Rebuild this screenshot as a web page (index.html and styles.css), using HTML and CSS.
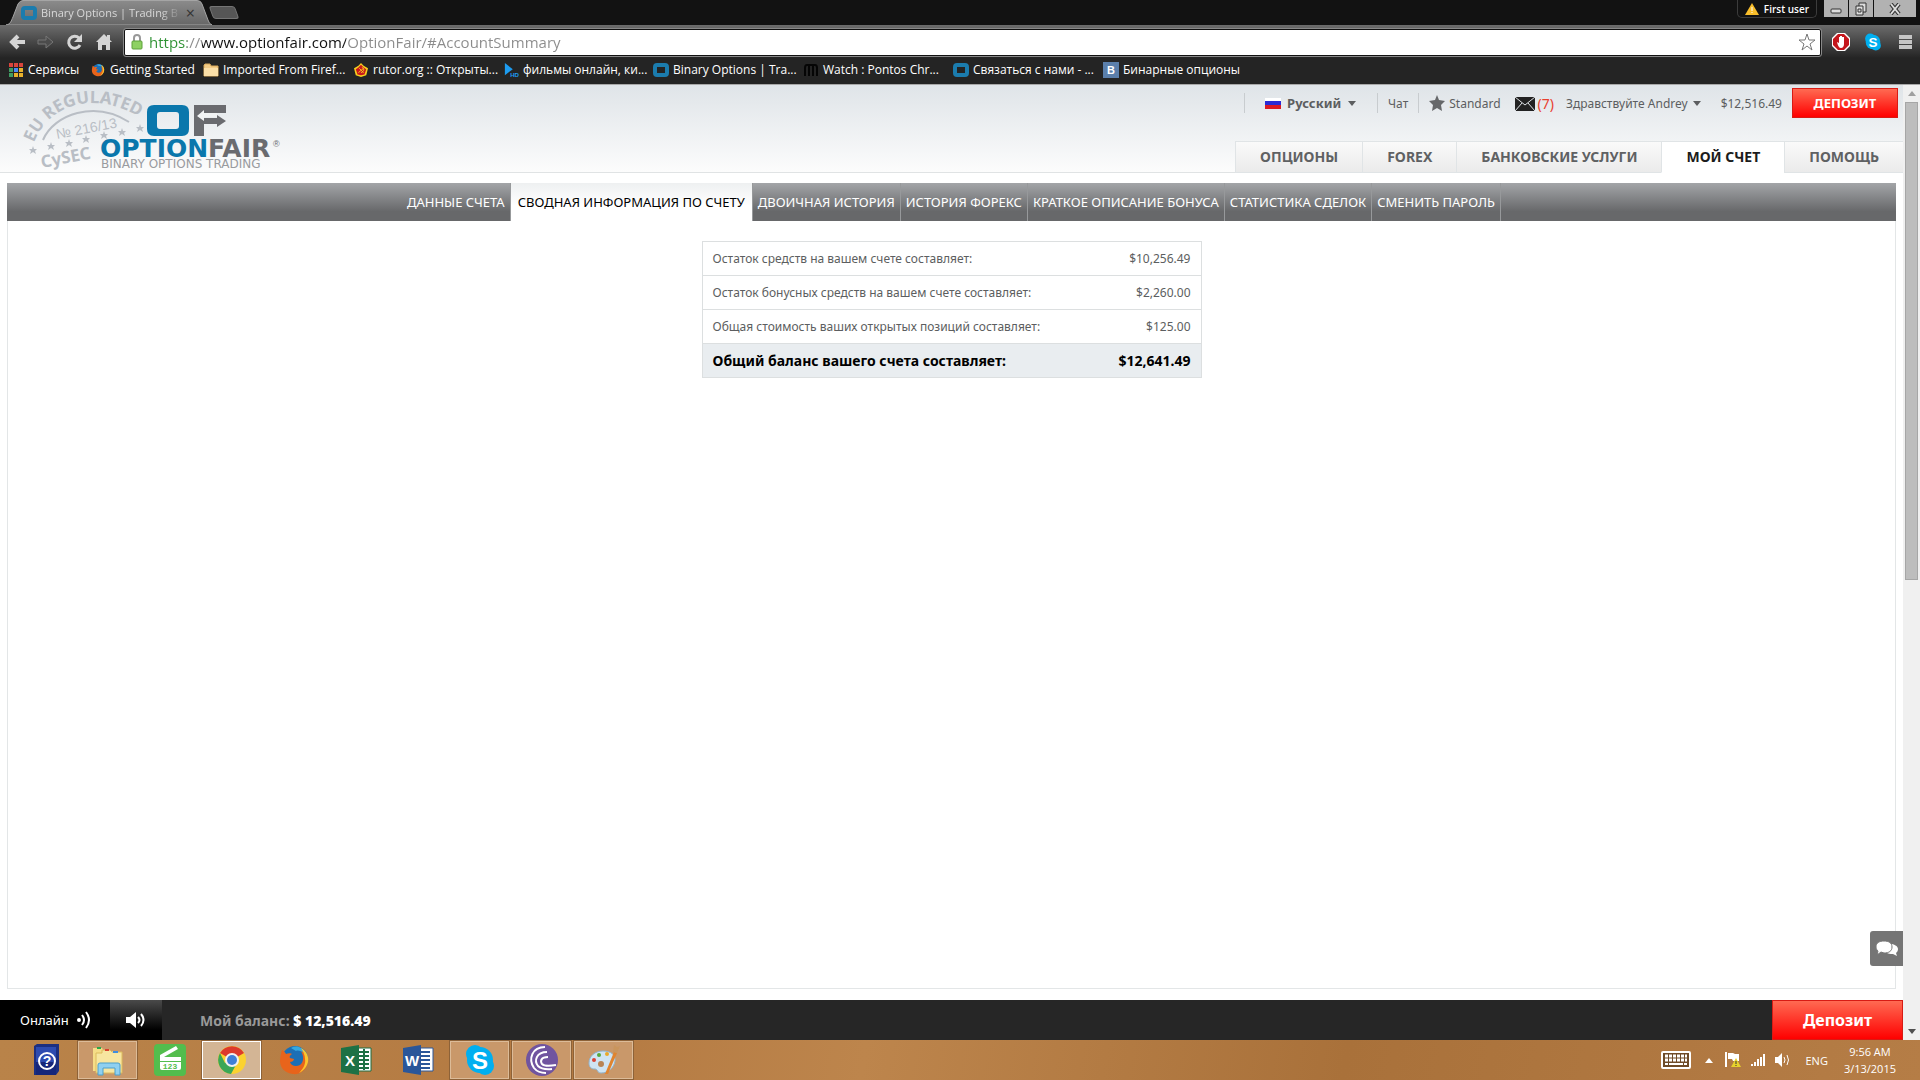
FILE: index.html
```
<!DOCTYPE html>
<html lang="ru">
<head>
    <meta charset="UTF-8" />
    <meta name="viewport" content="width=device-width, initial-scale=1.0"/>
    <title>Binary Options | Trading</title>
    <link rel="stylesheet" href="styles.css">
</head>
<body>
    <svg class="defs" aria-hidden="true">
        <symbol id="i-of" viewBox="0 0 16 14"><rect x="2" y="2" width="12" height="10" rx="2" fill="none" stroke="#1b7cae" stroke-width="4"/></symbol>
        <symbol id="i-firefox" viewBox="0 0 32 32">
            <circle cx="17" cy="15" r="13" fill="#1c6fb5"/>
            <path d="M13 4c5-3 12-1 14 5-4-2-7-3-9-2z" fill="#35a8e0"/>
            <path d="M4 6c2 1 3 2 4 4 2-1 5-1 6 0-2 1-3 3-2 4l4 1c0 2-2 3-4 3 1 4 6 5 10 3 4-3 4-9 1-14 6 3 8 9 6 14-2 6-8 10-14 9C7 29 2 24 2 17 2 13 3 9 4 6z" fill="#e8641b"/>
            <path d="M23 4c6 3 8 9 7 14-1 5-5 9-9 11 4-4 7-9 6-14 0-4-2-8-4-11z" fill="#fbc52d"/>
        </symbol>
        <symbol id="i-skype" viewBox="0 0 32 32">
            <circle cx="11" cy="10" r="9" fill="#00aff0"/><circle cx="21" cy="22" r="9" fill="#00aff0"/><circle cx="16" cy="16" r="13" fill="#00aff0"/>
            <text x="16" y="25" text-anchor="middle" class="skype-s">S</text>
        </symbol>
        <symbol id="i-caret" viewBox="0 0 8 5"><path d="M0 0h8L4 5z" fill="#5c5e60"/></symbol>
    </svg>

    <header class="browser">
        <div class="tab-strip">
            <div class="tab">
                <svg class="tab-shape" viewBox="0 0 206 25" preserveAspectRatio="none">
                    <defs><linearGradient id="tab_fill" x1="0" y1="0" x2="0" y2="1"><stop offset="0" stop-color="#8b8b8b"/><stop offset="1" stop-color="#676767"/></linearGradient></defs>
                    <path d="M0 25C5 24 5 21 7 17L12 4Q14 .5 17 .5H191Q195 .5 196 4L202 20Q203 24 206 25z" fill="url(#tab_fill)" stroke="#a5a5a5"/>
                </svg>
                <svg class="tab-icon"><use href="#i-of"/></svg>
                <span class="tab-title">Binary Options | Trading B</span>
                <button class="tab-close" aria-label="Close tab">×</button>
            </div>
            <button class="new-tab" aria-label="New tab"></button>
            <div class="window-controls">
                <button class="profile"><svg width="14" height="12" viewBox="0 0 14 12"><path d="M7 0l7 12H0z" fill="#f9be2b"/><path d="M7 4v4M7 9v1" stroke="#fff" stroke-width="1"/></svg>First user</button>
                <div class="window-buttons">
                    <button aria-label="Minimize"><svg width="12" height="12"><rect x="1" y="6" width="10" height="4" rx="1" fill="#ddd" stroke="#333"/></svg></button>
                    <button aria-label="Restore"><svg width="14" height="14" fill="#ddd" stroke="#333"><path d="M5 1h7v9H5z"/><path d="M2 4h7v9H2z"/><path d="M4 7h3v3H4z"/></svg></button>
                    <button class="close" aria-label="Close"><svg width="12" height="12"><path d="M2 1l8 10M10 1L2 11" stroke="#333" stroke-width="4"/><path d="M2 1l8 10M10 1L2 11" stroke="#ddd" stroke-width="2"/></svg></button>
                </div>
            </div>
        </div>

        <div class="toolbar">
            <button aria-label="Back"><svg viewBox="0 0 18 18"><path d="M10 3L4 9l6 6M4 9h13" fill="none" stroke="#d5d5d5" stroke-width="4"/></svg></button>
            <button aria-label="Forward"><svg viewBox="0 0 18 18"><path d="M1 7h8V3l7 6-7 6v-4H1z" fill="#4c4c4c" stroke="#777"/></svg></button>
            <button aria-label="Reload"><svg viewBox="0 0 18 18"><path d="M14 12a6 6 0 1 1-1-7" fill="none" stroke="#d5d5d5" stroke-width="3"/><path d="M16 1v8H8z" fill="#d5d5d5"/></svg></button>
            <button aria-label="Home"><svg viewBox="0 0 18 18"><path d="M9 1l8 8h-2v8h-4v-5H7v5H3V9H1z" fill="#d5d5d5"/><path d="M12 2h3v5h-3z" fill="#d5d5d5"/></svg></button>
            <div class="omnibox">
                <svg class="lock" viewBox="0 0 12 16"><path d="M3 8V4a3 3 0 0 1 6 0v4" fill="none" stroke="#999" stroke-width="2"/><rect x="1" y="7" width="10" height="8" rx="1" fill="#8ed163" stroke="#5da13b"/></svg>
                <input class="address" type="text" aria-label="Address" value="https://www.optionfair.com/OptionFair/#AccountSummary">
                <svg class="star" viewBox="0 0 18 18"><path d="M9 1l2 6h6l-5 4 2 6-5-4-5 4 2-6-5-4h6z" fill="#fff" stroke="#777"/></svg>
            </div>
            <div class="extensions">
                <button aria-label="AdBlock"><svg viewBox="0 0 18 18"><path d="M5 0h8l5 5v8l-5 5H5l-5-5V5z" fill="#fff"/><path d="M6 1h6l5 5v6l-5 5H6l-5-5V6z" fill="#c4161c"/><path d="M5 9l2 1V4h1v4V3h1v5V3h1v5V4h2v7c0 2-1 4-3 4s-3-2-4-6z" fill="#fff"/></svg></button>
                <button aria-label="Skype"><svg viewBox="0 0 32 32"><use href="#i-skype"/></svg></button>
                <button aria-label="Menu"><svg viewBox="0 0 18 18"><path d="M3 4h13M3 9h13M3 14h13" stroke="#c5c5c5" stroke-width="4"/></svg></button>
            </div>
        </div>

        <nav class="bookmarks">
            <a class="apps" href="#"><svg viewBox="0 0 14 14"><path d="M0 2h4M5 2h4M10 2h4" stroke="#d9453d" stroke-width="4"/><path d="M0 7h4" stroke="#3f9b62" stroke-width="4"/><path d="M5 7h4" stroke="#4a8af4" stroke-width="4"/><path d="M10 7h4M10 12h4M5 12h4" stroke="#e8b12c" stroke-width="4"/><path d="M0 12h4" stroke="#3f9b62" stroke-width="4"/></svg><span>Сервисы</span></a>
            <a class="started" href="#"><svg><use href="#i-firefox"/></svg><span>Getting Started</span></a>
            <a href="#"><svg viewBox="0 0 16 14"><path d="M1 2l1-1h5l1 2h7v10H1z" fill="#f3cb86" stroke="#d9a95a"/><path d="M1 5h14v8H1z" fill="#fbdfa8"/></svg><span>Imported From Firef...</span></a>
            <a href="#"><svg viewBox="0 0 16 16"><path d="M8 0l3 3 5 3-2 8-6 2-6-2-2-8 5-3z" fill="#f7cf1d"/><path d="M8 2l3 3 3 2-2 6-4 1-4-1-2-6 3-2z" fill="#c9171d"/><path d="M5 11l6-5M6 6l5 5M9 5c3 1 3 5-1 6" fill="none" stroke="#f7cf1d"/></svg><span>rutor.org :: Открыты...</span></a>
            <a href="#"><svg viewBox="0 0 16 16"><path d="M1 0l9 7-9 7z" fill="#1d9cf0"/><text x="7" y="16" class="hd">HD</text></svg><span>фильмы онлайн, ки...</span></a>
            <a href="#"><svg><use href="#i-of"/></svg><span>Binary Options | Tra...</span></a>
            <a href="#"><svg viewBox="0 0 16 14"><path d="M2 13V5q0-3 2-3h8q2 0 2 3v8M6 13V3M10 13V3" fill="none" stroke="#050505" stroke-width="2"/></svg><span>Watch : Pontos Chr...</span></a>
            <a href="#"><svg><use href="#i-of"/></svg><span>Связаться с нами - ...</span></a>
            <a href="#"><svg class="square" viewBox="0 0 16 16"><rect width="16" height="16" fill="#5b7fab"/><text x="8" y="12" text-anchor="middle" class="vk">B</text></svg><span>Бинарные опционы</span></a>
        </nav>
    </header>

    <div class="viewport">
        <div class="page">
            <header class="site-header">
                <a class="logo" href="#" aria-label="OptionFair">
                    <svg width="300" height="87" viewBox="0 0 300 87">
                        <defs>
                            <path id="arc_top" d="M34 58C48 20 95 2 146 36"/>
                            <path id="star" d="M0 -4L1 -1H4L2 1L3 4L0 2L-3 4L-2 1L-4 -1H-1z"/>
                        </defs>
                        <g fill="#b9bec5">
                            <text class="stamp"><textPath href="#arc_top">EU REGULATED</textPath></text>
                            <path d="M43 55C54 29 95 15 129 37" fill="none" stroke="#b9bec5" stroke-width="2"/>
                            <text class="stamp-no" transform="translate(57 54) rotate(-11)">№ 216/13</text>
                            <use href="#star" x="33" y="65"/><use href="#star" x="51" y="61"/><use href="#star" x="69" y="58"/><use href="#star" x="86" y="54"/><use href="#star" x="104" y="50"/><use href="#star" x="122" y="47"/><use href="#star" x="140" y="43"/>
                            <text class="stamp-cysec" transform="translate(42 83) rotate(-11)">CySEC</text>
                        </g>
                        <path fill-rule="evenodd" d="M154 20h28q7 0 7 7v17q0 7-7 7h-28q-7 0-7-7V27q0-7 7-7zM160 27q-3 0-3 3v11q0 3 3 3h16q3 0 3-3V30q0-3-3-3z" fill="#0a77ac"/>
                        <path d="M194 20h32v8h-22v5h13v-3l9 6-9 6v-3h-13v12h-10z" fill="#6a6b6f"/>
                        <path d="M197 31l7-6v3h13v4h-13v4z" fill="#f1f3f4"/>
                        <text x="100" y="72" class="brand"><tspan fill="#0a77ac">OPTION</tspan><tspan fill="#6a6b6f">FAIR</tspan></text>
                        <text x="273" y="62" class="reg">®</text>
                        <text x="101" y="83" class="tagline">BINARY OPTIONS TRADING</text>
                    </svg>
                </a>
                <div class="header-right">
                    <div class="user-bar">
                        <label class="language">
                            <svg width="16" height="11" viewBox="0 0 16 11"><path d="M0 0h16v4H0z" fill="#fff"/><path d="M0 3h16v5H0z" fill="#2b2bd5"/><path d="M0 7h16v4H0z" fill="#dc1a22"/></svg>
                            <select aria-label="Язык"><option>Русский</option></select>
                            <svg class="caret"><use href="#i-caret"/></svg>
                        </label>
                        <a class="chat-link" href="#">Чат</a>
                        <a class="level" href="#"><svg width="16" height="16" viewBox="0 0 16 16"><path d="M8 0l2 5 6 1-4 4 1 6-5-3-5 3 1-6-4-4 6-1z" fill="#66686a"/></svg>Standard</a>
                        <a class="mail" href="#"><svg width="20" height="14" viewBox="0 0 20 14"><rect width="20" height="14" fill="#222"/><path d="M0 0l10 8L20 0M0 14l7-8M20 14l-7-8" fill="none" stroke="#dfe3e6"/></svg>(7)</a>
                        <button class="greeting">Здравствуйте Andrey<svg class="caret"><use href="#i-caret"/></svg></button>
                        <span class="funds">$12,516.49</span>
                        <button class="deposit">ДЕПОЗИТ</button>
                    </div>
                    <nav class="main-nav">
                        <a href="#">ОПЦИОНЫ</a>
                        <a href="#">FOREX</a>
                        <a href="#">БАНКОВСКИЕ УСЛУГИ</a>
                        <a class="active" href="#">МОЙ СЧЕТ</a>
                        <a href="#">ПОМОЩЬ</a>
                    </nav>
                </div>
            </header>

            <main class="content">
                <nav class="sub-nav">
                    <a href="#">ДАННЫЕ СЧЕТА</a>
                    <a class="active" href="#">СВОДНАЯ ИНФОРМАЦИЯ ПО СЧЕТУ</a>
                    <a href="#">ДВОИЧНАЯ ИСТОРИЯ</a>
                    <a href="#">ИСТОРИЯ ФОРЕКС</a>
                    <a href="#">КРАТКОЕ ОПИСАНИЕ БОНУСА</a>
                    <a href="#">СТАТИСТИКА СДЕЛОК</a>
                    <a href="#">СМЕНИТЬ ПАРОЛЬ</a>
                </nav>
                <div class="panel">
                    <table class="summary">
                        <tbody>
                            <tr><th scope="row">Остаток средств на вашем счете составляет:</th><td>$10,256.49</td></tr>
                            <tr><th scope="row">Остаток бонусных средств на вашем счете составляет:</th><td>$2,260.00</td></tr>
                            <tr><th scope="row">Общая стоимость ваших открытых позиций составляет:</th><td>$125.00</td></tr>
                            <tr class="total"><th scope="row">Общий баланс вашего счета составляет:</th><td>$12,641.49</td></tr>
                        </tbody>
                    </table>
                </div>
            </main>

            <button class="chat-float" aria-label="Чат"><svg width="22" height="16" viewBox="0 0 22 16"><path d="M14 3c4 0 8 2 8 5 0 2-1 3-2 4l1 3-4-2c-3 0-5 0-7-2z" fill="#fff"/><path d="M8 0c5 0 8 2 8 6s-3 6-8 6l-3-1-4 3 1-4C1 9 0 8 0 6c0-4 3-6 8-6z" fill="#fff" stroke="#757575"/></svg></button>

            <footer class="status-bar">
                <div class="online">Онлайн<svg width="15" height="18" viewBox="0 0 15 18" fill="none" stroke="#fff" stroke-width="2"><circle cx="3" cy="9" r="2" fill="#fff" stroke="none"/><path d="M6 4q4 5 0 10M10 1q6 8 0 16"/></svg></div>
                <button class="sound" aria-label="Звук"><svg width="20" height="16" viewBox="0 0 20 16"><path d="M0 5h4l6-5v16l-6-5H0z" fill="#fff"/><path d="M12 5q3 3 0 6M15 2q5 6 0 12" fill="none" stroke="#fff" stroke-width="2"/></svg></button>
                <p class="balance">Мой баланс: <strong>$ 12,516.49</strong></p>
                <button class="deposit deposit-large">Депозит</button>
            </footer>
        </div>
        <div class="scrollbar">
            <div class="arrow"><svg width="8" height="5" viewBox="0 0 8 5"><path d="M0 5h8L4 0z" fill="#a0a0a0"/></svg></div>
            <div class="thumb"></div>
            <div class="track"></div>
            <div class="arrow"><svg width="8" height="5" viewBox="0 0 8 5"><path d="M0 0h8L4 5z" fill="#505050"/></svg></div>
        </div>
    </div>

    <div class="taskbar">
        <div class="apps-row">
            <button aria-label="Help"><svg viewBox="0 0 32 32"><path d="M4 2l3-2h22v27l-3 4H4z" fill="#1c2f80"/><path d="M6 3h20v28H6z" fill="#2d4bb0"/><path d="M6 18h20v13H6z" fill="#16267a"/><circle cx="17" cy="17" r="8" fill="none" stroke="#fff" stroke-width="2"/><text x="17" y="22" text-anchor="middle" class="q">?</text></svg></button>
            <button class="open" aria-label="Explorer"><svg viewBox="0 0 32 32"><path d="M1 4h9l2 3h9v20H1z" fill="#f5dd87"/><path d="M10 6h8l2 2h10v21H4V9h6z" fill="#f7e6a0" stroke="#dcbb5c"/><path d="M5 3h4v2H5z" fill="#2ca84a"/><path d="M13 5h4v2h-4z" fill="#d9402f"/><path d="M21 7h5v2h-5z" fill="#3e8ede"/><path d="M6 31V21q0-2 2-2h18q2 0 2 2v10h-5v-7H11v7z" fill="#8fd0f0" stroke="#4c9fca"/></svg></button>
            <button aria-label="123"><svg viewBox="0 0 32 32"><rect width="32" height="32" rx="4" fill="#53bd4d"/><path d="M6 11L22 2l2 3-14 8h17v4H6z" fill="#fff"/><path d="M6 18h21v6q0 2-2 2H8q-2 0-2-2z" fill="#fff"/><text x="16" y="25" text-anchor="middle" class="n123">123</text></svg></button>
            <button class="open current" aria-label="Chrome"><svg viewBox="0 0 32 32"><circle cx="16" cy="16" r="14" fill="#fbd22f"/><path d="M16 16L4 9A14 14 0 0 1 28 9z" fill="#dc3a2c"/><path d="M4 9a14 14 0 0 0 11 21l6-11-5-3-7 3z" fill="#3aa757"/><circle cx="16" cy="16" r="7" fill="#f1f1f1"/><circle cx="16" cy="16" r="5" fill="#3f7fd6"/></svg></button>
            <button aria-label="Firefox"><svg><use href="#i-firefox"/></svg></button>
            <button aria-label="Excel"><svg viewBox="0 0 32 32"><path d="M16 4h15v23H16z" fill="#fff" stroke="#1d6f42"/><path d="M19 8h10M19 12h10M19 16h10M19 20h10M19 24h10M24 5v21" stroke="#1d6f42" stroke-width="2"/><path d="M1 4l18-3v30L1 28z" fill="#1d7145"/><text x="10" y="22" text-anchor="middle" class="office">X</text></svg></button>
            <button aria-label="Word"><svg viewBox="0 0 32 32"><path d="M16 4h15v23H16z" fill="#fff" stroke="#2a5699"/><path d="M19 8h9M19 12h9M19 16h9M19 20h9M19 24h9" stroke="#2a5699" stroke-width="2"/><path d="M1 4l18-3v30L1 28z" fill="#2a5699"/><text x="10" y="22" text-anchor="middle" class="office">W</text></svg></button>
            <button class="open" aria-label="Skype"><svg><use href="#i-skype"/></svg></button>
            <button class="open" aria-label="BitTorrent"><svg viewBox="0 0 32 32"><circle cx="16" cy="16" r="16" fill="#70549f"/><path d="M19 3C6 3 2 15 8 24q4 5 12 5M21 8C10 8 8 17 12 22q4 4 14 3M22 13c-7 0-8 4-6 7q3 3 14 1" fill="none" stroke="#fff" stroke-width="2"/></svg></button>
            <button class="open" aria-label="Paint"><svg viewBox="0 0 32 32"><path d="M15 7c8 0 13 4 12 10-1 7-7 12-14 12-4 0-3-4-6-4-4 0-6-2-6-6C1 12 7 7 15 7z" fill="#cfe4f3" stroke="#8fb4d0"/><circle cx="6" cy="16" r="2" fill="#d84436"/><circle cx="11" cy="11" r="2" fill="#54a83c"/><circle cx="19" cy="10" r="2" fill="#e9a92a"/><circle cx="13" cy="20" r="3" fill="#b98454"/><path d="M17 30l9-22 3 1-9 21z" fill="#e0842f"/><path d="M25 8l1-7 3 2 3-1-3 7z" fill="#c9955d"/></svg></button>
        </div>
        <div class="tray">
            <svg class="keyboard" width="30" height="18" viewBox="0 0 30 18"><rect x="1" y="1" width="28" height="16" rx="1" fill="#6e4b28" stroke="#fff" stroke-width="2"/><path d="M4 5h22M4 9h22" stroke="#fff" stroke-width="3" stroke-dasharray="3 1"/><path d="M4 13h3M8 13h14M23 13h3" stroke="#fff" stroke-width="2"/></svg>
            <svg width="8" height="5" viewBox="0 0 8 5"><path d="M0 5h8L4 0z" fill="#fff"/></svg>
            <svg class="flag" width="16" height="16" viewBox="0 0 16 16"><path d="M1 0v15" stroke="#fff" stroke-width="2"/><path d="M3 1h5l2 1h4v7H8L7 7H3z" fill="#fff"/><path d="M11 6l5 9H6z" fill="#e8d22c"/><path d="M11 9v3M11 13v1" stroke="#333"/></svg>
            <svg width="16" height="14" viewBox="0 0 16 14"><path d="M1 11h2v2H1zM4 9h2v4H4zM7 6h2v7H7zM10 4h2v9h-2zM13 1h2v12h-2z" fill="#fff"/></svg>
            <svg width="15" height="14" viewBox="0 0 15 14"><path d="M0 4h3l4-4v14l-4-4H0z" fill="#fff"/><path d="M9 4q2 3 0 6M12 2q3 5 0 10" fill="none" stroke="#fff"/></svg>
            <span class="lang">ENG</span>
            <div class="clock"><time>9:56 AM</time><time>3/13/2015</time></div>
        </div>
    </div>
</body>
</html>
```
FILE: styles.css
```
* {
    box-sizing: border-box;
}

body {
    margin: 0;
    height: 100vh;
    display: flex;
    flex-direction: column;
    overflow: hidden;
    font-family: 'Noto Sans', Tahoma, sans-serif;
    font-size: 12px;
    color: #5c5e60;
    background: #fff;
}

a {
    color: inherit;
    text-decoration: none;
}

button {
    border: none;
    padding: 0;
    background: none;
    color: inherit;
    font: inherit;
    display: flex;
    align-items: center;
    justify-content: center;
    cursor: pointer;
}

svg {
    flex: none;
}

.defs {
    display: none;
}

/* browser window */
.browser {
    font-family: 'Open Sans', 'Segoe UI', sans-serif;
    background: #242424;
    color: #fff;
    border-bottom: 1px solid #a8a8a8;
}

.tab-strip {
    height: 25px;
    display: flex;
    align-items: flex-start;
    padding-left: 6px;
    background: #121212;
}

.tab {
    position: relative;
    width: 206px;
    height: 25px;
    display: flex;
    align-items: center;
    gap: 4px;
    padding: 0 17px 0 15px;
    color: #d8d8d8;
}

.tab-shape {
    position: absolute;
    inset: 0;
    width: 100%;
    height: 100%;
}

.tab-icon {
    position: relative;
    width: 16px;
    height: 14px;
}

.tab-title {
    position: relative;
    flex: 1;
    overflow: hidden;
    white-space: nowrap;
    font-size: 11px;
    -webkit-mask-image: linear-gradient(to right, #000 85%, transparent);
    mask-image: linear-gradient(to right, #000 85%, transparent);
}

.tab-close {
    position: relative;
    color: #333;
    font-size: 16px;
    line-height: 16px;
}

.new-tab {
    width: 26px;
    height: 13px;
    margin: 6px 0 0 -1px;
    background: #565656;
    border: 1px solid #757575;
    border-radius: 3px;
    transform: skewX(20deg);
}

.window-controls {
    margin-left: auto;
    display: flex;
    gap: 7px;
    padding-right: 4px;
}

.profile {
    height: 18px;
    gap: 5px;
    padding: 0 7px;
    border: 1px solid #3c3c3c;
    border-top: none;
    border-radius: 0 0 5px 5px;
    font-size: 10px;
    font-weight: 600;
}

.window-buttons {
    display: flex;
    gap: 1px;
}

.window-buttons button {
    width: 24px;
    height: 17px;
    background: #b2b2b2;
}

.window-buttons .close {
    width: 42px;
}

.toolbar {
    height: 33px;
    display: flex;
    align-items: center;
    gap: 11px;
    padding: 1px 6px 0 8px;
    background: linear-gradient(#6c6c6c, #242424);
}

.toolbar button svg {
    width: 18px;
    height: 18px;
}

.extensions {
    display: flex;
    gap: 14px;
}

.omnibox {
    flex: 1;
    height: 27px;
    display: flex;
    align-items: center;
    gap: 6px;
    padding: 0 4px 0 6px;
    background: #fff;
    border: 1px solid #111;
    outline: 1px solid #888;
    border-radius: 2px;
}

.lock {
    width: 12px;
    height: 16px;
}

.star {
    width: 18px;
    height: 18px;
}

/* scheme, host and path each get their own colour */
.address {
    flex: 1;
    border: none;
    outline: none;
    padding: 0;
    font-family: 'Open Sans', 'Segoe UI', sans-serif;
    font-size: 15px;
    line-height: 22px;
    color: transparent;
    caret-color: #000;
    background: linear-gradient(to right, #2d9132 38px, #8b8b8b 38px, #8b8b8b 53px, #111 53px, #111 197px, #8b8b8b 197px);
    -webkit-background-clip: text;
    background-clip: text;
}

.bookmarks {
    height: 26px;
    display: flex;
    align-items: center;
    padding: 0 8px 3px;
}

.bookmarks a {
    width: 150px;
    display: flex;
    align-items: center;
    gap: 4px;
    white-space: nowrap;
}

.bookmarks svg {
    width: 16px;
    height: 14px;
}

.bookmarks .square {
    height: 16px;
}

.bookmarks .apps {
    width: 82px;
}

.bookmarks .started {
    width: 113px;
}

.hd {
    font: bold 7px 'Liberation Sans', sans-serif;
    fill: #1d9cf0;
}

.vk {
    font: bold 11px 'Liberation Sans', sans-serif;
    fill: #fff;
}

/* page */
.viewport {
    flex: 1;
    min-height: 0;
    display: flex;
}

.page {
    position: relative;
    flex: 1;
    display: flex;
    flex-direction: column;
}

.site-header {
    height: 88px;
    display: flex;
    justify-content: space-between;
    background: linear-gradient(#dfe4e8, #fcfcfc);
    border-bottom: 1px solid #e0e3e4;
}

.logo svg {
    display: block;
}

.stamp {
    font: bold 17px 'Noto Sans', sans-serif;
}

.stamp-no {
    font: 14px 'Liberation Sans', sans-serif;
}

.stamp-cysec {
    font: bold 17px 'Noto Sans', sans-serif;
}

.brand {
    font: bold 25px 'DejaVu Sans', sans-serif;
}

.reg {
    font: 9px 'Liberation Sans', sans-serif;
    fill: #6a6b6f;
}

.tagline {
    font: 12px 'DejaVu Sans', sans-serif;
    fill: #999b9f;
}

.header-right {
    display: flex;
    flex-direction: column;
    align-items: flex-end;
    justify-content: space-between;
}

.user-bar {
    display: flex;
    align-items: center;
    padding: 3px 5px 0 0;
}

.user-bar > a,
.language {
    height: 20px;
    display: flex;
    align-items: center;
}

.language {
    gap: 6px;
    padding: 0 21px 0 20px;
    border-left: 1px solid #c8cccf;
    border-right: 1px solid #c8cccf;
}

.language select {
    appearance: none;
    border: none;
    padding: 0;
    background: none;
    color: inherit;
    font: bold 13px 'Noto Sans', Tahoma, sans-serif;
}

.caret {
    width: 8px;
    height: 5px;
}

.user-bar .chat-link {
    padding: 0 10px;
    border-right: 1px solid #c8cccf;
}

.level {
    gap: 4px;
    padding-left: 10px;
}

.user-bar .mail {
    gap: 3px;
    padding-left: 14px;
    color: #e8402f;
    font-size: 14px;
}

.mail svg {
    margin-top: 2px;
}

.greeting {
    gap: 5px;
    padding-left: 12px;
}

.funds {
    padding: 0 10px 0 20px;
}

.deposit {
    width: 106px;
    height: 30px;
    border: 1px solid #d81b14;
    background: linear-gradient(#ff6a52, #ff0000);
    color: #fff;
    font-size: 13px;
    font-weight: bold;
}

.main-nav {
    display: flex;
    margin-bottom: -1px;
}

.main-nav a {
    height: 32px;
    padding: 0 24px;
    line-height: 29px;
    font-size: 14px;
    font-weight: bold;
    color: #5f6163;
    background: linear-gradient(#fafafa, #ebebeb);
    border: 1px solid #e0e4e6;
    border-right: none;
}

.main-nav .active {
    color: #1c1c1c;
    background: #fff;
    border-bottom-color: #fff;
}

.content {
    flex: 1;
    display: flex;
    flex-direction: column;
    padding: 10px 7px 11px;
}

.sub-nav {
    height: 38px;
    display: flex;
    justify-content: center;
    background: linear-gradient(#a3a5a8, #67686a 75%);
}

.sub-nav a {
    padding: 0 5px;
    line-height: 38px;
    font-size: 13px;
    color: #fff;
    border-right: 1px solid #97999b;
}

.sub-nav .active {
    padding: 0 7px;
    color: #000;
    background: linear-gradient(#eef0f1, #fff 60%);
}

.panel {
    flex: 1;
    padding-top: 20px;
    border: 1px solid #e3e6e7;
    border-top: none;
}

.summary {
    width: 500px;
    margin: 0 auto;
    border-collapse: collapse;
    border: 1px solid #dcdfe0;
}

.summary tr {
    height: 34px;
    border-bottom: 1px solid #dcdfe0;
}

.summary th,
.summary td {
    padding: 0 10px;
    text-align: left;
    font-weight: normal;
}

.summary td {
    text-align: right;
}

.summary .total {
    background: #e9edf0;
    color: #000;
    font-size: 14px;
}

.summary .total th,
.summary .total td {
    font-weight: bold;
}

.chat-float {
    position: absolute;
    right: 0;
    bottom: 74px;
    width: 33px;
    height: 35px;
    background: #757575;
    border-radius: 3px 0 0 3px;
}

.status-bar {
    height: 40px;
    display: flex;
    align-items: center;
    background: #262626;
    color: #fff;
}

.online {
    align-self: stretch;
    width: 110px;
    display: flex;
    align-items: center;
    gap: 7px;
    padding-left: 20px;
    background: #000;
    font-size: 13px;
}

.sound {
    align-self: stretch;
    width: 52px;
    background: linear-gradient(#4a4a4a, #000 75%);
}

.balance {
    flex: 1;
    margin: 0;
    padding-left: 38px;
    font-size: 14px;
    font-weight: bold;
    color: #999;
}

.balance strong {
    color: #fff;
}

.deposit-large {
    width: 131px;
    height: 40px;
    font-size: 16px;
}

.scrollbar {
    width: 17px;
    display: flex;
    flex-direction: column;
    background: #f0f0f0;
}

.arrow {
    height: 17px;
    display: flex;
    align-items: center;
    justify-content: center;
}

.thumb {
    flex: 477;
    margin: 0 2px;
    background: #bdbdbd;
    border: 1px solid #a6a6a6;
}

.track {
    flex: 444;
}

/* desktop taskbar */
.taskbar {
    height: 40px;
    display: flex;
    align-items: center;
    justify-content: space-between;
    padding: 0 24px 0 16px;
    background: linear-gradient(100deg, #b98349, #b47a42 30%, #bd854c 45%, #a9713a 70%, #b57d46);
    color: #fff;
    font-family: 'Open Sans', 'Segoe UI', sans-serif;
}

.apps-row {
    display: flex;
    gap: 3px;
}

.apps-row button {
    width: 59px;
    height: 38px;
}

.apps-row svg {
    width: 32px;
    height: 32px;
}

.apps-row .open {
    background: #c9986a;
    border: 1px solid #dcbb98;
    outline: 1px solid #8d6238;
}

.apps-row .current {
    background: #d3b595;
    border-color: #fff;
}

.skype-s {
    font: bold 24px 'Liberation Sans', sans-serif;
    fill: #fff;
}

.q {
    font: bold 14px 'Liberation Sans', sans-serif;
    fill: #fff;
}

.n123 {
    font: bold 8px 'Liberation Mono', monospace;
    fill: #53bd4d;
}

.office {
    font: bold 15px 'Liberation Sans', sans-serif;
    fill: #fff;
}

.tray {
    display: flex;
    align-items: center;
    gap: 9px;
    font-size: 11px;
}

.tray .flag {
    margin-left: 3px;
}

.tray .keyboard {
    margin-right: 5px;
}

.lang {
    padding: 0 7px 0 6px;
}

.clock {
    display: flex;
    flex-direction: column;
    align-items: center;
    line-height: 17px;
}
```
